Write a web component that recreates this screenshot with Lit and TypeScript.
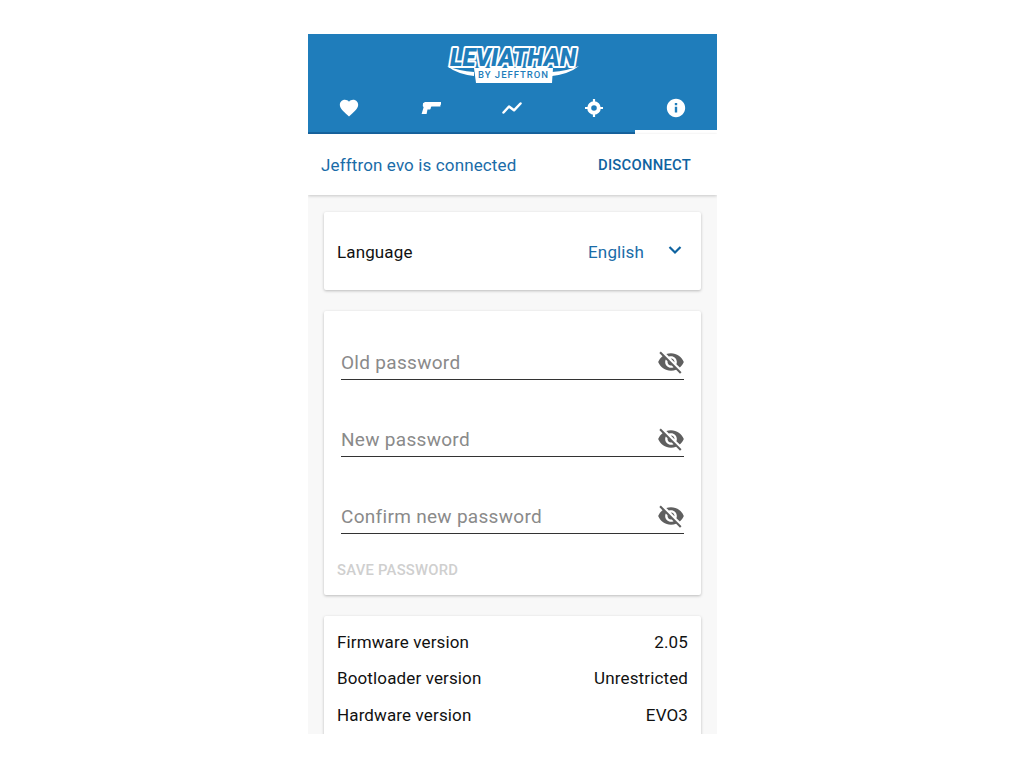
import { LitElement, html, css, svg } from "lit";
import { customElement } from "lit/decorators.js";

const eyeOff = svg`<path d="M12 7c2.76 0 5 2.24 5 5 0 .65-.13 1.26-.36 1.83l2.92 2.92c1.51-1.26 2.7-2.89 3.43-4.75-1.73-4.39-6-7.5-11-7.5-1.4 0-2.74.25-3.98.7l2.16 2.16C10.74 7.13 11.35 7 12 7zM2 4.27l2.28 2.28.46.46C3.08 8.3 1.78 10.02 1 12c1.73 4.39 6 7.5 11 7.5 1.55 0 3.03-.3 4.38-.84l.42.42L19.73 22 21 20.73 3.27 3 2 4.27zM7.53 9.8l1.55 1.55c-.05.21-.08.43-.08.65 0 1.66 1.34 3 3 3 .22 0 .44-.03.65-.08l1.55 1.55c-.67.33-1.41.53-2.2.53-2.76 0-5-2.24-5-5 0-.79.2-1.53.53-2.2zm4.31-.78l3.15 3.15.02-.16c0-1.66-1.34-3-3-3l-.17.01z"/>`;

@customElement("app-root")
export class AppRoot extends LitElement {
  static styles = css`
    :host { display: block; width: 1024px; height: 768px; background: #fff; font-family: Roboto, "Liberation Sans", sans-serif; overflow: hidden; }
    .app { width: 409px; height: 700px; margin: 34px 0 0 308px; background: #f8f8f8; overflow: hidden; display: flex; flex-direction: column; }
    .header { background: #1f7dbb; height: 100px; flex: none; display: flex; flex-direction: column; align-items: center; }
    .logo { display: block; margin-top: 7px; width: 140px; height: 44px; flex: none; overflow: visible; }
    .tabs { display: grid; grid-template-columns: repeat(5, 1fr); width: 100%; height: 49px; }
    .tab { display: flex; align-items: center; justify-content: center; box-sizing: border-box; border-bottom: 2px solid #17649f; height: 49px; padding-bottom: 1px; position: relative; }
    .tab.on { border-bottom: 0; padding-bottom: 3px; }
    .tab.on::after { content: ""; position: absolute; left: 0; right: 0; bottom: 0; height: 4px; background: #fff; }
    .tab svg { display: block; fill: #fff; }
    .status { background: #fff; height: 61px; flex: none; display: flex; align-items: center; justify-content: space-between; padding: 1px 26px 0 13px; box-sizing: border-box; box-shadow: 0 1px 3px rgba(0,0,0,.2); position: relative; }
    .status .name { font-size: 17px; color: #1a6ca8; letter-spacing: .13px; }
    .status .btn { font-size: 14.8px; font-weight: 500; color: #0f63a0; letter-spacing: .25px; }
    .content { padding: 17px 16px 0 16px; display: flex; flex-direction: column; gap: 21px; }
    .card { background: #fff; border-radius: 2px; box-shadow: 0 1px 3px rgba(0,0,0,.25); }
    .lang { height: 78px; display: flex; align-items: center; justify-content: space-between; padding: 1px 18px 0 13px; box-sizing: border-box; font-size: 17px; color: #111; letter-spacing: .13px; }
    .lang .right { display: flex; align-items: center; gap: 23px; color: #1a6ca8; }
    .lang svg { display: block; margin-top: -4px; fill: none; stroke: #0f63a0; stroke-width: 2.2; }
    .pw { height: 284px; box-sizing: border-box; padding: 31px 17px 0 17px; display: flex; flex-direction: column; }
    .field { height: 35px; padding-top: 2px; border-bottom: 1px solid #333; display: flex; align-items: center; justify-content: space-between; margin-bottom: 39px; box-sizing: content-box; font-size: 19px; color: #8a8a8a; letter-spacing: .3px; }
    .field span { padding-top: 1px; }
    .field svg { display: block; fill: #5f5f5f; margin-right: -1px; }
    .save { font-size: 14.8px; font-weight: 500; color: #cfcfcf; margin: -12px 0 0 -4px; letter-spacing: .25px; }
    .info { padding: 7.6px 13px 0; display: flex; flex-direction: column; height: 200px; box-sizing: border-box; font-size: 17px; color: #111; letter-spacing: .13px; }
    .row { height: 36.5px; flex: none; display: flex; align-items: center; justify-content: space-between; }
  `;

  render() {
    const tabs = [
      svg`<svg width="22" height="22" viewBox="0 0 24 24"><path d="M12 21.35l-1.45-1.32C5.4 15.36 2 12.28 2 8.5 2 5.42 4.42 3 7.5 3c1.74 0 3.41.81 4.5 2.09C13.09 3.81 14.76 3 16.5 3 19.58 3 22 5.42 22 8.5c0 3.78-3.4 6.86-8.55 11.54L12 21.35z"/></svg>`,
      svg`<svg width="20" height="14" viewBox="0 0 20 14"><path d="M4 1h16v2.600l-.6.4v1.600H10.600c-.3 0-.5.2-.6.5l-.4 1.700c-.1.400-.4.700-.8.700H6.500L5.600 13H.6L2.600 6.200 1.800 5 2 2.200z"/></svg>`,
      svg`<svg width="22" height="14" viewBox="0 0 22 14"><path d="M2.500 11.500l5.500-6 5 3.800L19.500 2.500" fill="none" stroke="#fff" stroke-width="2.500" stroke-linecap="round" stroke-linejoin="round"/></svg>`,
      svg`<svg width="20" height="20" viewBox="0 0 20 20"><circle cx="10" cy="10" r="4.800" fill="none" stroke="#fff" stroke-width="4"/><path d="M8.900 1h2.200v4H8.900zM8.900 15h2.200v4H8.900zM1 8.900h4v2.200H1zM15 8.900h4v2.200h-4z"/></svg>`,
      svg`<svg width="22" height="22" viewBox="0 0 24 24"><path d="M12 2C6.480 2 2 6.480 2 12s4.480 10 10 10 10-4.480 10-10S17.520 2 12 2zm1.300 15h-2.600v-6.500h2.600V17zm0-8h-2.600V6.500h2.600V9z"/></svg>`,
    ];
    return html`
      <div class="app">
        <div class="header">
          <svg class="logo" viewBox="0 0 140 44">
            <path d="M4 25 Q16 30 31 31 L31 35 Q14 33 4 25 Z M136 25 Q124 30 109 31 L109 35 Q126 33 136 25 Z" fill="#fff"/>
            <path d="M31 27 H110 L109 42 H33 Z" fill="#fff"/>
            <text x="70" y="25" text-anchor="middle" font-family="Roboto, sans-serif" font-weight="900" font-style="italic" font-size="25" textLength="126" lengthAdjust="spacingAndGlyphs" fill="#1f7dbb" stroke="#fff" stroke-width="4" stroke-linejoin="round" paint-order="stroke">LEVIATHAN</text>
            <text x="70" y="37" text-anchor="middle" font-family="Roboto, sans-serif" font-weight="500" font-size="9.500" textLength="70" lengthAdjust="spacing" fill="#1f7dbb">BY JEFFTRON</text>
          </svg>
          <div class="tabs">
            ${tabs.map((t, i) => html`<div class="tab ${i === 4 ? "on" : ""}">${t}</div>`)}
          </div>
        </div>
        <div class="status">
          <span class="name">Jefftron evo is connected</span>
          <span class="btn">DISCONNECT</span>
        </div>
        <div class="content">
          <div class="card lang">
            <span>Language</span>
            <span class="right">English
              <svg width="16" height="10" viewBox="0 0 16 10"><path d="M2.500 2l5.500 5.500L13.500 2"/></svg>
            </span>
          </div>
          <div class="card pw">
            ${["Old password", "New password", "Confirm new password"].map(
              (p) => html`<div class="field"><span>${p}</span><svg width="28" height="28" viewBox="0 0 24 24">${eyeOff}</svg></div>`
            )}
            <div class="save">SAVE PASSWORD</div>
          </div>
          <div class="card info">
            <div class="row"><span>Firmware version</span><span>2.05</span></div>
            <div class="row"><span>Bootloader version</span><span>Unrestricted</span></div>
            <div class="row"><span>Hardware version</span><span>EVO3</span></div>
          </div>
        </div>
      </div>
    `;
  }
}
